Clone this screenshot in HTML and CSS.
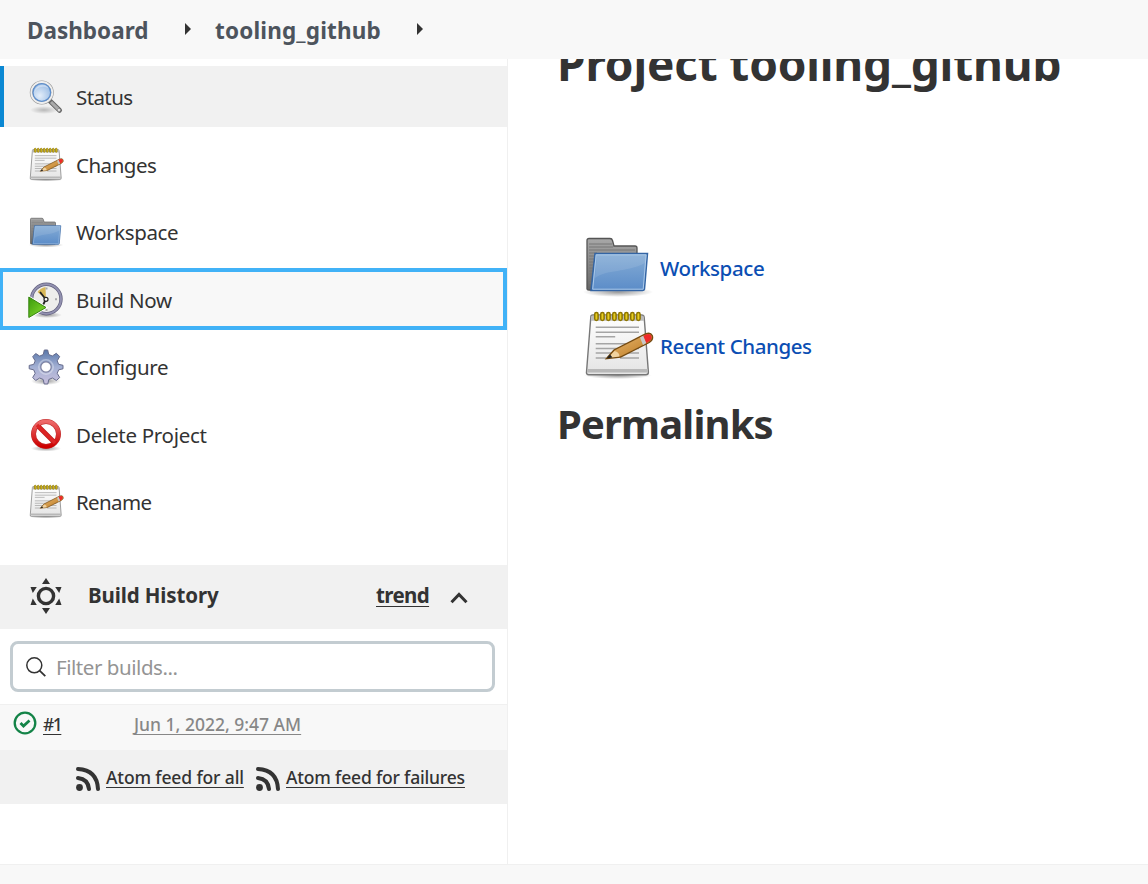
FILE: index.html
```
<!DOCTYPE html>
<html lang="en">
<head>
<meta charset="utf-8">
<title>tooling_github</title>
<link rel="stylesheet" href="styles.css">
</head>
<body>
<svg class="defs" aria-hidden="true">
  <defs>
    <linearGradient id="blue" x1="0" y1="0" x2="0" y2="1"><stop offset="0" stop-color="#86add6"/><stop offset="1" stop-color="#5b8cc8"/></linearGradient>
    <linearGradient id="gray" x1="0" y1="0" x2="0" y2="1"><stop offset="0" stop-color="#a8a8a8"/><stop offset="1" stop-color="#666"/></linearGradient>
    <linearGradient id="paper" x1="0" y1="0" x2="0" y2="1"><stop offset="0" stop-color="#fff"/><stop offset="1" stop-color="#e4e4e4"/></linearGradient>
    <linearGradient id="wood" x1="0" y1="0" x2="1" y2="1"><stop offset="0" stop-color="#edc07a"/><stop offset="1" stop-color="#b8731a"/></linearGradient>
    <linearGradient id="gear" x1="0" y1="0" x2="0" y2="1"><stop offset="0" stop-color="#5876a9"/><stop offset=".5" stop-color="#a3b0d4"/><stop offset="1" stop-color="#c8bfdc"/></linearGradient>
    <linearGradient id="red" x1="0" y1="0" x2="0" y2="1"><stop offset="0" stop-color="#ee6a6a"/><stop offset="1" stop-color="#cc0000"/></linearGradient>
    <linearGradient id="green" x1="0" y1="0" x2="1" y2="1"><stop offset="0" stop-color="#3a9a0c"/><stop offset="1" stop-color="#8be030"/></linearGradient>
    <radialGradient id="lens" cx=".4" cy=".65" r=".7"><stop offset="0" stop-color="#e4eefa"/><stop offset="1" stop-color="#8fb4e0"/></radialGradient>
    <radialGradient id="shade"><stop offset="0" stop-color="#000" stop-opacity=".4"/><stop offset="1" stop-color="#000" stop-opacity="0"/></radialGradient>
    <symbol id="folder" viewBox="0 0 72 64">
      <ellipse cx="36" cy="56" rx="35" ry="5" fill="url(#shade)"/>
      <path d="M5 53V4.500q0-2 2-2h21q2 0 2.500 2l1.500 5.500h21q2 0 2 2V53q0 1-1 1H7q-2 0-2-1z" fill="url(#gray)" stroke="#555" stroke-width="1.300"/>
      <path d="M7 8h23M7 11h24M7 14h46M7 17h8M7 20h6M7 23h6M7 26h6M7 29h6M7 32h6M7 35h5M7 38h5M7 41h4M7 44h4M7 47h4" stroke="#777" stroke-width="1"/>
      <path d="M13 17.500h52.500l-3 35.500q-.3 1.500-2 1.500H9z" fill="url(#blue)" stroke="#3465a4" stroke-width="1.500"/>
      <path d="M14.200 18.800h49.900l-2.900 34.400h-50.500z" fill="none" stroke="#aac8e8" stroke-width="1"/>
      <path d="M13 42c12-9 31-5 50-15l.7-8H15z" fill="#fff" opacity=".1"/>
    </symbol>
    <symbol id="notepad" viewBox="0 0 72 72">
      <ellipse cx="36" cy="65.500" rx="34" ry="3.500" fill="url(#shade)"/>
      <path d="M8.800 7q0-2 2-2h48.700q2.500 0 2.700 2.500l4.200 54.700q0 2.500-2.500 2.500H6.700q-2.500 0-2.200-2.500z" fill="url(#paper)" stroke="#777" stroke-width="1.400"/>
      <path d="M9.500 5.800h52l.5 5H9z" fill="#bbb"/>
      <path d="M5.200 59h60.500v3.500H5.200z" fill="#b8b8b8"/>
      <path d="M13.700 17.300H57M13.700 22.300H57M13.700 26.700h19.500M13.700 33.700H57M13.700 38.500H57M13.700 43H57M13.700 48H24M38 48h19" stroke="#a5a5a5" stroke-width="1.500"/>
      <g fill="#e8ce20" stroke="#8c7400" stroke-width="1.500"><rect x="12.700" y="2.500" width="3.400" height="8" rx="1.700"/><rect x="18.700" y="2.500" width="3.400" height="8" rx="1.700"/><rect x="24.700" y="2.500" width="3.400" height="8" rx="1.700"/><rect x="30.700" y="2.500" width="3.400" height="8" rx="1.700"/><rect x="36.700" y="2.500" width="3.400" height="8" rx="1.700"/><rect x="42.700" y="2.500" width="3.400" height="8" rx="1.700"/><rect x="48.700" y="2.500" width="3.400" height="8" rx="1.700"/><rect x="54.700" y="2.500" width="3.400" height="8" rx="1.700"/></g>
      <path d="M24.500 48.500l7.500-8.500L63.500 24q5-2 6.700 1.500 1.500 4-3 7L38.500 47z" fill="url(#wood)" stroke="#754a10" stroke-width="1.400"/>
      <path d="M32.500 41q5 1 5 5.500l-11.500 1.500z" fill="#f1d3a0"/>
      <path d="M61 26l3-1.500q4-1.500 5.300 1.300 1.200 3.500-2.500 5.700L64 33.200z" fill="#ef2929"/>
      <path d="M58 27.500l3.200-1.700 3 7.300-3.200 1.800z" fill="#c8c8c8"/>
      <path d="M24.500 48.500l3.500-4 2.500 3z" fill="#222"/>
    </symbol>
  </defs>
</svg>

<header class="topbar">
  <a class="crumb crumb-home">Dashboard</a>
  <svg class="arrow" viewBox="0 0 6 12"><path d="M0 0l6 6-6 6z"/></svg>
  <a class="crumb crumb-project">tooling_github</a>
  <svg class="arrow" viewBox="0 0 6 12"><path d="M0 0l6 6-6 6z"/></svg>
</header>

<div class="page">
  <aside class="sidebar">
    <nav class="menu">
      <a class="task task-active">
        <svg class="icon" viewBox="0 0 36 36"><ellipse cx="16" cy="31" rx="14" ry="4" fill="url(#shade)" opacity=".6"/><path d="M22 22l9.500 9.300" stroke="#666" stroke-width="5" stroke-linecap="round"/><path d="M23 23l7 6.800" stroke="#aaa" stroke-width="3"/><circle cx="31" cy="31" r="1.500" fill="#ddd"/><circle cx="13.800" cy="13.500" r="10.500" fill="url(#lens)" stroke="#999" stroke-width="3"/><circle cx="13.800" cy="13.500" r="10.500" fill="none" stroke="#efefef" stroke-width="1.800"/><circle cx="13.800" cy="13.500" r="8.800" fill="none" stroke="#5d8fce" stroke-width="1.200"/><path d="M6 15.500c1-7 8-10 15-6-3-6-14-5-15 6z" fill="#fff" opacity=".35"/></svg>
        <span class="label label-status">Status</span>
      </a>
      <a class="task"><svg class="icon"><use href="#notepad"/></svg><span class="label label-changes">Changes</span></a>
      <a class="task"><svg class="icon icon-folder"><use href="#folder"/></svg><span class="label label-workspace">Workspace</span></a>
      <a class="task task-focus">
        <svg class="icon" viewBox="0 0 36 36"><ellipse cx="19" cy="33" rx="15" ry="3" fill="url(#shade)"/><circle cx="18.300" cy="17" r="14.700" fill="#eeeeec" stroke="#63617f" stroke-width="3.400"/><circle cx="18.300" cy="17" r="14.700" fill="none" stroke="#9291b0" stroke-width="2"/><path d="M18 17.500L9.500 10q3-4 8-5z" fill="#d8b858"/><path d="M17.500 17L12 10M17.500 18l-3 6" stroke="#222" stroke-width="1.800"/><circle cx="18" cy="17.300" r="2" fill="#fff" stroke="#222" stroke-width="1.200"/><path d="M18.500 5.500v2M29 17.300h-2M18.500 29v-2" stroke="#aaa" stroke-width="2"/><path d="M1 15v20.500L18 25.500z" fill="url(#green)" stroke="#fff" stroke-width="2.500"/><path d="M.8 15v20.500L18 25.500z" fill="url(#green)" stroke="#378410" stroke-width="1"/></svg>
        <span class="label label-build">Build Now</span>
      </a>
      <a class="task">
        <svg class="icon" viewBox="0 0 36 36"><ellipse cx="18" cy="32" rx="15" ry="4" fill="url(#shade)"/><path d="M15.300 5.500l1-4.500h3.400l1 4.500 3.600 1.500 4-2.700 3.400 3.200-2.500 4.300 1.400 3.500 4.400 1v3.500l-4.300 1-1.500 3.500 2.500 4.200-3.300 3-4-2.500-3.600 1.500-1 4.500h-3.600l-1-4.500-3.500-1.500-4 2.500-3-3 2.500-4.200-1.500-3.500-4.500-1v-3.400l4.500-1 1.500-3.500-2.500-4.200 3-3.200 4 2.600z" fill="url(#gear)" stroke="#666b8c" stroke-width="1"/><circle cx="18" cy="18" r="7.200" fill="none" stroke="#fff" stroke-width="1.500" opacity=".35"/><circle cx="18" cy="18" r="5.200" fill="#fff" stroke="#7c809f" stroke-width="1.200"/></svg>
        <span class="label label-configure">Configure</span>
      </a>
      <a class="task">
        <svg class="icon" viewBox="0 0 36 36"><ellipse cx="18" cy="31.500" rx="15" ry="3" fill="url(#shade)"/><circle cx="18" cy="17" r="12.500" fill="#fff" stroke="#c03030" stroke-width="5"/><path d="M9 8l18 18" stroke="#b81818" stroke-width="4.600"/><circle cx="18" cy="17" r="12.500" fill="none" stroke="url(#red)" stroke-width="3.800"/><path d="M9 8l18 18" stroke="#dc2525" stroke-width="3.400"/></svg>
        <span class="label label-delete">Delete Project</span>
      </a>
      <a class="task"><svg class="icon"><use href="#notepad"/></svg><span class="label label-rename">Rename</span></a>
    </nav>

    <section class="history">
      <div class="history-head">
        <svg class="sun" viewBox="0 0 32 36"><circle cx="16" cy="18" r="7.600" fill="none" stroke="#333" stroke-width="3.400"/><g fill="#333"><path id="ray" d="M16 0l4 6h-8z"/><use href="#ray" transform="rotate(180 16 18)"/><path d="M.5 9h6.300l-4 6zM31.500 9h-6.300l4 6zM.5 27h6.300l-4-6.500zM31.500 27h-6.300l4-6.500z"/></g></svg>
        <span class="history-title">Build History</span>
        <a class="trend">trend</a>
        <svg class="chevron" viewBox="0 0 18 12"><path d="M1.500 10.200L9 2.500l7.500 7.700" fill="none" stroke="#333" stroke-width="3"/></svg>
      </div>
      <div class="filter">
        <svg class="search" viewBox="0 0 20 20"><circle cx="8.300" cy="8.300" r="7.500" fill="none" stroke="#333" stroke-width="1.500"/><path d="M13.600 13.600l5.700 5.500" stroke="#333" stroke-width="1.800"/></svg>
        <span class="placeholder">Filter builds...</span>
      </div>
      <div class="build">
        <svg class="ok" viewBox="0 0 24 24"><circle cx="12" cy="12" r="10.300" fill="none" stroke="#138347" stroke-width="2.300"/><path d="M7.500 12l3 3 6-5.500" fill="none" stroke="#138347" stroke-width="2.800"/></svg>
        <a class="build-no"><span class="build-id">#1</span></a>
        <a class="build-date">Jun 1, 2022, 9:47 AM</a>
      </div>
      <div class="feeds">
        <svg class="rss" viewBox="0 0 24 24"><circle cx="3.500" cy="20.500" r="3.400" fill="#333"/><path d="M2 2q19 1 20 20M2 11q10 1 11 11" fill="none" stroke="#333" stroke-width="4" stroke-linecap="round"/></svg>
        <a class="feed feed-all">Atom feed for all</a>
        <svg class="rss" viewBox="0 0 24 24"><circle cx="3.500" cy="20.500" r="3.400" fill="#333"/><path d="M2 2q19 1 20 20M2 11q10 1 11 11" fill="none" stroke="#333" stroke-width="4" stroke-linecap="round"/></svg>
        <a class="feed feed-failures">Atom feed for failures</a>
      </div>
    </section>
  </aside>

  <main class="content">
    <h1 class="title">Project tooling_github</h1>
    <div class="links">
      <a class="link"><svg class="big-icon big-folder"><use href="#folder"/></svg><span class="link-workspace">Workspace</span></a>
      <a class="link"><svg class="big-icon big-notepad"><use href="#notepad"/></svg><span class="link-changes">Recent Changes</span></a>
    </div>
    <h2 class="permalinks">Permalinks</h2>
  </main>
</div>
<footer class="footer"></footer>
</body>
</html>
```
FILE: styles.css
```
* { box-sizing: border-box; }
body { margin: 0; height: 884px; display: flex; flex-direction: column; overflow: hidden; background: #fff; color: #333; font-family: "Noto Sans", "Open Sans", sans-serif; }
.defs { position: absolute; width: 0; height: 0; }
svg { display: block; flex: none; }

.topbar { flex: none; display: flex; align-items: center; height: 59px; padding: 0 27px; background: #f8f8f8; white-space: nowrap; }
.crumb { color: #4d545d; font-size: 22.500px; font-weight: 700; line-height: 30px; margin-top: 2px; }
.crumb-home { width: 158px; }
.crumb-project { width: 202px; margin-left: 24px; letter-spacing: .17px; }
.arrow { width: 6px; height: 12px; fill: #333; margin-bottom: 1px; }

.page { flex: none; display: flex; height: 805px; overflow: hidden; }
.sidebar { width: 508px; flex: none; border-right: 1px solid #f0f0f0; padding-top: 7px; }

.menu { display: flex; flex-direction: column; gap: 5.500px; height: 499px; }
.task { flex: none; display: flex; align-items: center; height: 62px; padding-left: 28px; white-space: nowrap; }
.task-active { height: 61px; margin-bottom: 1px; padding-left: 24px; border-left: 4px solid #0b88d3; background: #f1f1f1; }
.task-focus { height: 62px; margin: -1px 0 1px; padding: 2px 0 0 25px; border: 4px solid #41b2f7; border-left-width: 3px; background: #f8f8f8; }
.icon { width: 36px; height: 36px; margin-right: 12px; }
.icon-folder { height: 32px; margin-top: 1px; }
.label { font-size: 20.500px; line-height: 28px; }
.label-status { letter-spacing: -.6px; }
.label-changes { letter-spacing: -.5px; }
.label-workspace { letter-spacing: -.42px; }
.label-build { letter-spacing: -.25px; }
.label-configure { letter-spacing: -.33px; }
.label-delete { letter-spacing: -.28px; }
.label-rename { letter-spacing: -.65px; }

.history-head { display: flex; align-items: center; height: 64px; background: #f1f1f1; padding-left: 30px; font-size: 20.500px; font-weight: 700; }
.sun { width: 32px; height: 36px; margin-top: -2px; }
.history-title { margin-left: 26px; width: 288px; line-height: 28px; margin-top: -4px; letter-spacing: -.12px; }
.trend { width: 53px; line-height: 28px; margin-top: -4px; letter-spacing: -.62px; }
.chevron { width: 18px; height: 12px; margin-left: 21px; margin-top: 1px; }
.trend, .build-no, .build-date, .feed { text-decoration: underline; text-decoration-thickness: 1px; text-underline-offset: 3px; text-decoration-skip-ink: none; }

.filter { display: flex; align-items: center; width: 485px; height: 51px; margin: 12px 0 12px 10px; padding-left: 13px; border: 3px solid #c3ccd1; border-radius: 8px; }
.search { width: 20px; height: 20px; }
.placeholder { margin-left: 10px; color: #949494; font-size: 20.500px; letter-spacing: -.45px; }

.build { display: flex; align-items: center; height: 46px; padding: 0 0 8px 13px; border-top: 1px solid #f0f0f0; background: #f8f8f8; font-size: 17.500px; font-weight: 500; white-space: nowrap; }
.ok { width: 24px; height: 24px; margin: -2px 6px 0 0; }
.build-no { width: 91px; letter-spacing: -1.500px; }
.build-date { color: #878787; }

.feeds { display: flex; align-items: center; height: 54px; padding-left: 76px; background: #f1f1f1; font-size: 17.500px; font-weight: 500; white-space: nowrap; }
.rss { width: 24px; height: 24px; margin: 4px 6px 0 0; }
.feed-all { width: 150px; letter-spacing: -.13px; }
.feed-failures { letter-spacing: -.18px; }

.content { flex: 1; padding-left: 49px; overflow: hidden; white-space: nowrap; }
.title { margin: -24px 0 0; font-size: 46px; font-weight: 700; line-height: 56px; letter-spacing: -.18px; }
.links { margin: 138px 0 0 25px; }
.link { display: flex; align-items: center; height: 78px; color: #0b4eb3; font-size: 20.500px; font-weight: 500; }
.big-icon { width: 72px; margin-right: 6px; }
.big-folder { height: 64px; }
.big-notepad { height: 72px; margin-top: -1px; }
.link-workspace { letter-spacing: -.38px; }
.link-changes { letter-spacing: -.42px; }
.permalinks { margin: 11px 0 0; font-size: 40px; font-weight: 700; line-height: 56px; letter-spacing: -.85px; }

.footer { flex: none; height: 20px; border-top: 1px solid #f0f0f0; background: #f8f8f8; }
```
